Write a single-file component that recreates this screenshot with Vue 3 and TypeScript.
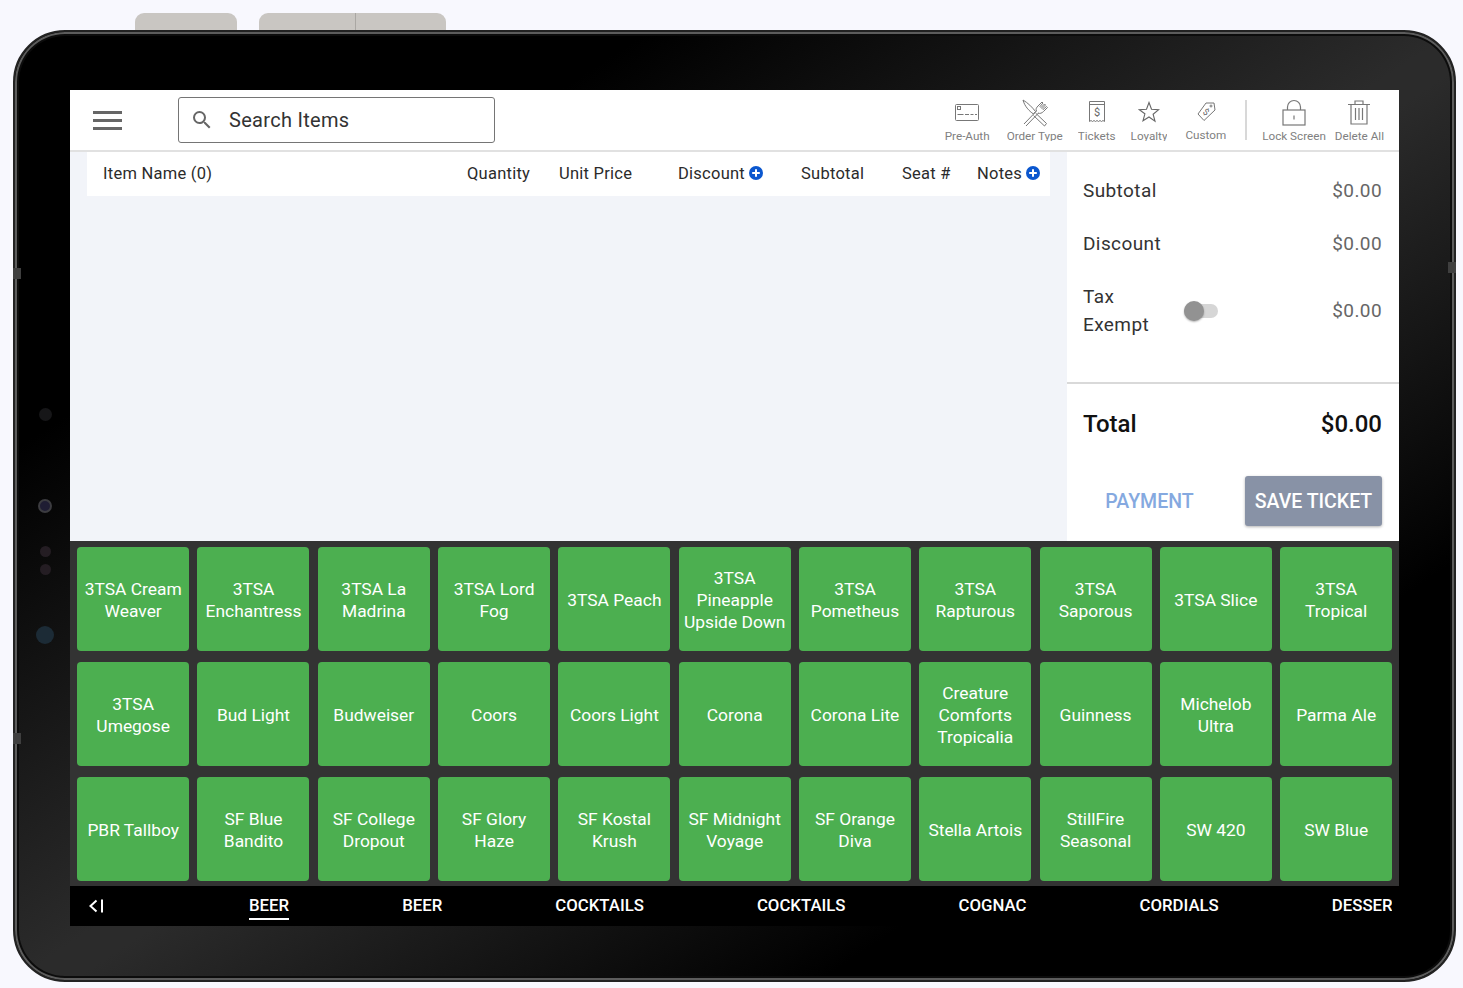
<script setup lang="ts">
const columns = ['Item Name (0)', 'Quantity', 'Unit Price', 'Discount', 'Subtotal', 'Seat #', 'Notes']
const withPlus = ['Discount', 'Notes']

const items = [
  '3TSA Cream Weaver', '3TSA Enchantress', '3TSA La Madrina', '3TSA Lord Fog', '3TSA Peach',
  '3TSA Pineapple Upside Down', '3TSA Pometheus', '3TSA Rapturous', '3TSA Saporous', '3TSA Slice',
  '3TSA Tropical', '3TSA Umegose', 'Bud Light', 'Budweiser', 'Coors', 'Coors Light', 'Corona',
  'Corona Lite', 'Creature Comforts Tropicalia', 'Guinness', 'Michelob Ultra', 'Parma Ale',
  'PBR Tallboy', 'SF Blue Bandito', 'SF College Dropout', 'SF Glory Haze', 'SF Kostal Krush',
  'SF Midnight Voyage', 'SF Orange Diva', 'Stella Artois', 'StillFire Seasonal', 'SW 420', 'SW Blue',
]

const tabs = ['BEER', 'BEER', 'COCKTAILS', 'COCKTAILS', 'COGNAC', 'CORDIALS', 'DESSERT']
</script>

<template>
  <div class="page">
    <!-- Hardware buttons on the top edge -->
    <div class="top-keys">
      <div class="key key-power"></div>
      <div class="key key-volume"></div>
    </div>

    <div class="device">
      <span class="notch notch-l1"></span>
      <span class="notch notch-l2"></span>
      <span class="notch notch-r1"></span>
      <span class="lens lens-a"></span>
      <span class="lens lens-b"></span>
      <span class="lens lens-c"></span>
      <span class="lens lens-d"></span>
      <span class="lens lens-e"></span>

      <div class="screen">
        <!-- Top bar -->
        <header class="topbar">
          <div class="menu-btn"><i></i><i></i><i></i></div>
          <div class="search">
            <svg width="24" height="24" viewBox="0 0 24 24" fill="#666">
              <path d="M15.5 14h-.79l-.28-.27A6.47 6.47 0 0 0 16 9.5 6.5 6.5 0 1 0 9.5 16c1.61 0 3.09-.59 4.23-1.57l.27.28v.79l5 4.99L20.49 19l-4.99-5zm-6 0C7.01 14 5 11.99 5 9.5S7.01 5 9.5 5 14 7.01 14 9.5 11.99 14 9.5 14z" />
            </svg>
            <span>Search Items</span>
          </div>

          <nav class="tools">
            <div class="tool">
              <svg class="ic-card" width="26" height="20" viewBox="0 0 26 20" fill="none" stroke="#777" stroke-width="1">
                <rect x="1.5" y="1.5" width="23" height="16" rx="1" />
                <rect x="3.5" y="3.5" width="3" height="3" />
                <path d="M3.500 11.500h6M11 11.500h4M16.500 11.500h3M21 11.500h2" />
              </svg>
              <span>Pre-Auth</span>
            </div>
            <div class="tool tool-wide">
              <svg class="ic-cross" width="28" height="28" viewBox="0 0 28 28" fill="none" stroke="#777" stroke-width="1">
                <path d="M2 1c5 3 9 7 12.500 11.500l-2 2.500C8 12 3.500 7 2 1z" />
                <path d="M14.500 14l11 10.500-2 2.500-11-10.500" />
                <path d="M3 25l12.500-13M5 27l12.500-13" />
                <path d="M15.500 12c-1-2 0-3.500 1.500-5l4-4 1 1-3 3.500 1 1 3.500-3.500 1 1-3.500 3.500 1 1 3.500-3 1 1-4 4c-1.500 1.500-3.500 2.500-5.500 1.500" />
              </svg>
              <span>Order Type</span>
            </div>
            <div class="tool">
              <svg class="ic-ticket" width="18" height="24" viewBox="0 0 18 24" fill="none" stroke="#777" stroke-width="1">
                <path d="M1.500 1.500h15v20l-1.500-1-1.500 1-1.500-1-1.500 1-1.500-1-1.500 1-1.500-1-1.500 1-1.500-1-1.500 1z" />
                <path d="M1.500 4.500h15" />
                <text x="9" y="16" text-anchor="middle" class="dollar" stroke="none" fill="#666">$</text>
              </svg>
              <span>Tickets</span>
            </div>
            <div class="tool">
              <svg class="ic-star" width="22" height="22" viewBox="0 0 22 22" fill="none" stroke="#666" stroke-width="1.1">
                <path d="M11 1.500l2.500 6.800 7.200.4-5.600 4.500 1.900 7L11 16l-6 3.800 1.900-7L1.300 8.700l7.200-.4z" />
              </svg>
              <span>Loyalty</span>
            </div>
            <div class="tool tool-custom">
              <svg class="ic-tag" width="20" height="22" viewBox="0 0 20 22" fill="none" stroke="#777" stroke-width="1" stroke-linejoin="round">
                <path d="M18 2h-8L2 13l6 6.500L19 9z" />
                <circle cx="15" cy="5" r="1" />
                <text x="10" y="14" text-anchor="middle" class="dollar small" stroke="none" fill="#666" transform="rotate(35 10 11)">$</text>
              </svg>
              <span>Custom</span>
            </div>
            <div class="tool-divider"></div>
            <div class="tool">
              <svg class="ic-lock" width="26" height="27" viewBox="0 0 26 27" fill="none" stroke="#777" stroke-width="1.200">
                <rect x="2" y="11" width="22" height="15" />
                <path d="M6.500 11V8a6.500 6.500 0 0 1 13 0v3" />
                <path d="M13 16.500v4" />
              </svg>
              <span>Lock Screen</span>
            </div>
            <div class="tool tool-last">
              <svg class="ic-trash" width="24" height="26" viewBox="0 0 24 26" fill="none" stroke="#777" stroke-width="1.200">
                <path d="M1 5.500h22M8 5.500V2h8v3.500" />
                <path d="M4 5.500V25h16V5.500" />
                <path d="M8.500 9v12M12 9v12M15.500 9v12" />
              </svg>
              <span>Delete All</span>
            </div>
          </nav>
        </header>

        <!-- Ticket + totals -->
        <section class="ticket">
          <div class="ticket-left">
            <div class="ticket-head">
              <div v-for="col in columns" :key="col" class="col">
                {{ col }}
                <svg v-if="withPlus.includes(col)" width="14" height="14" viewBox="0 0 14 14">
                  <circle cx="7" cy="7" r="7" fill="#0b57cf" />
                  <path d="M7 3.200v7.600M3.200 7h7.600" stroke="#fff" stroke-width="2" />
                </svg>
              </div>
            </div>
          </div>

          <aside class="totals">
            <div class="summary">
              <div class="row"><span>Subtotal</span><b>$0.00</b></div>
              <div class="row"><span>Discount</span><b>$0.00</b></div>
              <div class="row row-tax">
                <span class="tax-label">Tax<br />Exempt</span>
                <div class="switch"><i></i></div>
                <b>$0.00</b>
              </div>
            </div>
            <div class="grand"><span>Total</span><span>$0.00</span></div>
            <div class="actions">
              <button class="pay" disabled>PAYMENT</button>
              <button class="save">SAVE TICKET</button>
            </div>
          </aside>
        </section>

        <!-- Menu items -->
        <section class="grid">
          <button v-for="(item, i) in items" :key="i" class="tile">{{ item }}</button>
        </section>

        <!-- Categories -->
        <footer class="tabs">
          <svg class="back" width="16" height="16" viewBox="0 0 16 16" fill="none" stroke="#fff" stroke-width="2">
            <path d="M8.500 2.500L2.500 8l6 5.500M14 1.500v13" />
          </svg>
          <div class="tab-strip">
            <span v-for="(tab, i) in tabs" :key="i" class="tab" :class="{ active: i === 0 }">{{ tab }}</span>
          </div>
        </footer>
      </div>
    </div>
  </div>
</template>

<style>
html,
body {
  margin: 0;
  background: #f8f8fe;
  overflow: hidden;
}
</style>

<style scoped>
.page {
  width: 1463px;
  height: 988px;
  padding-top: 13px;
  box-sizing: border-box;
  font-family: Roboto, "Liberation Sans", sans-serif;
}

.top-keys {
  display: flex;
  gap: 22px;
  height: 17px;
  padding-left: 135px;
}

.key {
  height: 17px;
  background: #c9c6c2;
  border-radius: 9px 9px 0 0;
}

.key-power {
  width: 102px;
}

.key-volume {
  width: 187px;
  background: linear-gradient(to right, #c9c6c2 96px, #aaa7a3 96px, #aaa7a3 97px, #c9c6c2 97px);
}

.device {
  position: relative;
  margin-left: 13px;
  width: 1443px;
  height: 952px;
  box-sizing: border-box;
  padding: 58px 55px;
  border: 2px solid #222;
  border-radius: 52px;
  background: linear-gradient(to bottom right, #000 22%, #2b2b2b 50%, #2b2b2b 52%, #000 78%);
  box-shadow: inset 0 0 0 2px #5c5c5c, inset 0 0 0 4px #0c0c0c;
}

.notch {
  position: absolute;
  width: 8px;
  height: 11px;
  background: #3f3f3f;
}

.notch-l1 { left: -2px; top: 236px; }
.notch-l2 { left: -2px; top: 701px; }
.notch-r1 { right: -2px; top: 230px; }

.lens {
  position: absolute;
  border-radius: 50%;
  filter: blur(0.5px);
}

.lens-a { left: 24px; top: 376px; width: 13px; height: 13px; background: #161618; }
.lens-b { left: 23px; top: 467px; width: 14px; height: 14px; background: #1f1d33; border: 2px solid #3c3c40; box-sizing: border-box; }
.lens-c { left: 25px; top: 514px; width: 11px; height: 11px; background: #241d23; }
.lens-d { left: 25px; top: 532px; width: 11px; height: 11px; background: #241d23; }
.lens-e { left: 21px; top: 594px; width: 18px; height: 18px; background: #1c2b36; }

.screen {
  width: 1329px;
  height: 836px;
  display: flex;
  flex-direction: column;
  background: #f2f4f9;
}

.topbar {
  height: 60px;
  flex: none;
  display: flex;
  align-items: center;
  background: #fff;
  border-bottom: 2px solid #e1e1e1;
  box-sizing: content-box;
}

.menu-btn {
  width: 29px;
  margin-left: 23px;
  display: flex;
  flex-direction: column;
  gap: 5px;
}

.menu-btn i {
  height: 3px;
  background: #666;
}

.search {
  width: 317px;
  height: 46px;
  margin-left: 56px;
  display: flex;
  align-items: center;
  gap: 15px;
  padding-left: 11px;
  box-sizing: border-box;
  border: 1px solid #757575;
  border-radius: 3px;
  font-size: 20px;
  letter-spacing: 0.3px;
  color: #333;
}

.tools {
  margin-left: auto;
  display: flex;
  align-items: flex-start;
  gap: 15px;
  height: 60px;
  padding-right: 15px;
}

.tool {
  height: 60px;
  display: flex;
  flex-direction: column;
  align-items: center;
  justify-content: flex-end;
  position: relative;
  color: #808080;
  font-size: 11.700px;
}

.tool svg {
  position: absolute;
  left: 50%;
  transform: translateX(-50%);
}

.tool svg.ic-card { top: 13px; }
.tool svg.ic-cross { top: 9px; }
.tool svg.ic-ticket { top: 10px; }
.tool svg.ic-star { top: 11px; }
.tool svg.ic-tag { top: 11px; }
.tool svg.ic-lock { top: 9px; }
.tool svg.ic-trash { top: 9px; }

.tool span {
  height: 11.500px;
  line-height: 14px;
  overflow: hidden;
  margin-bottom: 9.500px;
  white-space: nowrap;
}

.tool-wide {
  margin-left: 2px;
}

.tool-custom {
  margin-left: 3px;
}

.tool-custom span {
  margin-bottom: 10.500px;
}

.tool-last {
  margin-left: -6px;
}

.dollar {
  font-size: 11px;
  font-family: Roboto, sans-serif;
}

.dollar.small {
  font-size: 9px;
}

.tool-divider {
  width: 2px;
  height: 40px;
  margin-top: 10px;
  margin-left: 4px;
  background: #d8d8d8;
}

.ticket {
  flex: 1;
  min-height: 0;
  display: flex;
  background: #f2f4f9;
}

.ticket-left {
  flex: 1;
  padding-left: 17px;
  padding-right: 17px;
}

.ticket-head {
  height: 44px;
  box-sizing: border-box;
  padding-bottom: 2px;
  display: grid;
  grid-template-columns: 364px 92px 119px 123px 101px 75px 1fr;
  align-items: center;
  padding-left: 16px;
  background: #fff;
  font-size: 16.500px;
  letter-spacing: 0.25px;
  color: #2b2b2b;
}

.col {
  display: flex;
  align-items: center;
  gap: 4px;
  white-space: nowrap;
}

.totals {
  width: 332px;
  flex: none;
  display: flex;
  flex-direction: column;
  background: #fff;
}

.summary {
  height: 232px;
  flex: none;
  box-sizing: border-box;
  padding: 12px 17px 0 16px;
  border-bottom: 2px solid #d9d9d9;
}

.row {
  height: 53px;
  display: flex;
  align-items: center;
  justify-content: space-between;
  font-size: 19px;
  letter-spacing: 0.4px;
  color: #333;
}

.row b {
  font-weight: 400;
  color: #666;
}

.row-tax {
  height: 80px;
}

.tax-label {
  width: 100px;
  line-height: 28px;
  margin-top: 2px;
}

.switch {
  width: 34px;
  height: 14px;
  border-radius: 7px;
  background: #d6d6d6;
  position: relative;
  margin-right: 114px;
  margin-top: 2px;
}

.switch i {
  position: absolute;
  left: 0;
  top: -3px;
  width: 20px;
  height: 20px;
  border-radius: 50%;
  background: #929292;
  box-shadow: 0 1px 2px rgba(0, 0, 0, 0.3);
}

.grand {
  height: 79px;
  flex: none;
  display: flex;
  align-items: center;
  justify-content: space-between;
  padding: 0 17px 0 16px;
  font-size: 24px;
  font-weight: 500;
  color: #111;
}

.actions {
  flex: none;
  margin-top: 13px;
  display: flex;
  align-items: center;
  justify-content: flex-end;
  padding-right: 17px;
}

.actions button {
  flex: none;
  font-family: inherit;
  font-size: 19.500px;
  font-weight: 500;
  border: none;
  cursor: pointer;
}

.pay {
  width: 165px;
  margin-right: 13px;
  padding: 0;
  background: none;
  color: #85a9e0;
}

.save {
  width: 137px;
  height: 50px;
  padding: 0;
  border-radius: 3px;
  background: #8892a6;
  color: #fff;
  box-shadow: 0 1px 3px rgba(0, 0, 0, 0.3);
}

.grid {
  height: 345px;
  flex: none;
  box-sizing: border-box;
  display: grid;
  grid-template-columns: repeat(11, 112px);
  grid-auto-rows: 104px;
  column-gap: 8.300px;
  row-gap: 11px;
  padding: 6px 7px 0 7.200px;
  background: #333;
}

.tile {
  padding: 1px 4px 0;
  border: none;
  border-radius: 4px;
  background: #4caf50;
  color: #fff;
  font-family: inherit;
  font-size: 17.400px;
  line-height: 22px;
  text-align: center;
}

.tabs {
  height: 40px;
  flex: none;
  display: flex;
  background: #000;
  color: #fff;
}

.back {
  margin: 12px 0 0 18px;
  flex: none;
}

.tab-strip {
  flex: 1;
  display: flex;
  gap: 113px;
  padding-left: 145px;
  margin-right: 7px;
  overflow: hidden;
}

.tab {
  height: 32px;
  line-height: 38px;
  font-size: 16.800px;
  font-weight: 500;
  white-space: nowrap;
}

.tab.active {
  border-bottom: 2px solid #fff;
}
</style>
